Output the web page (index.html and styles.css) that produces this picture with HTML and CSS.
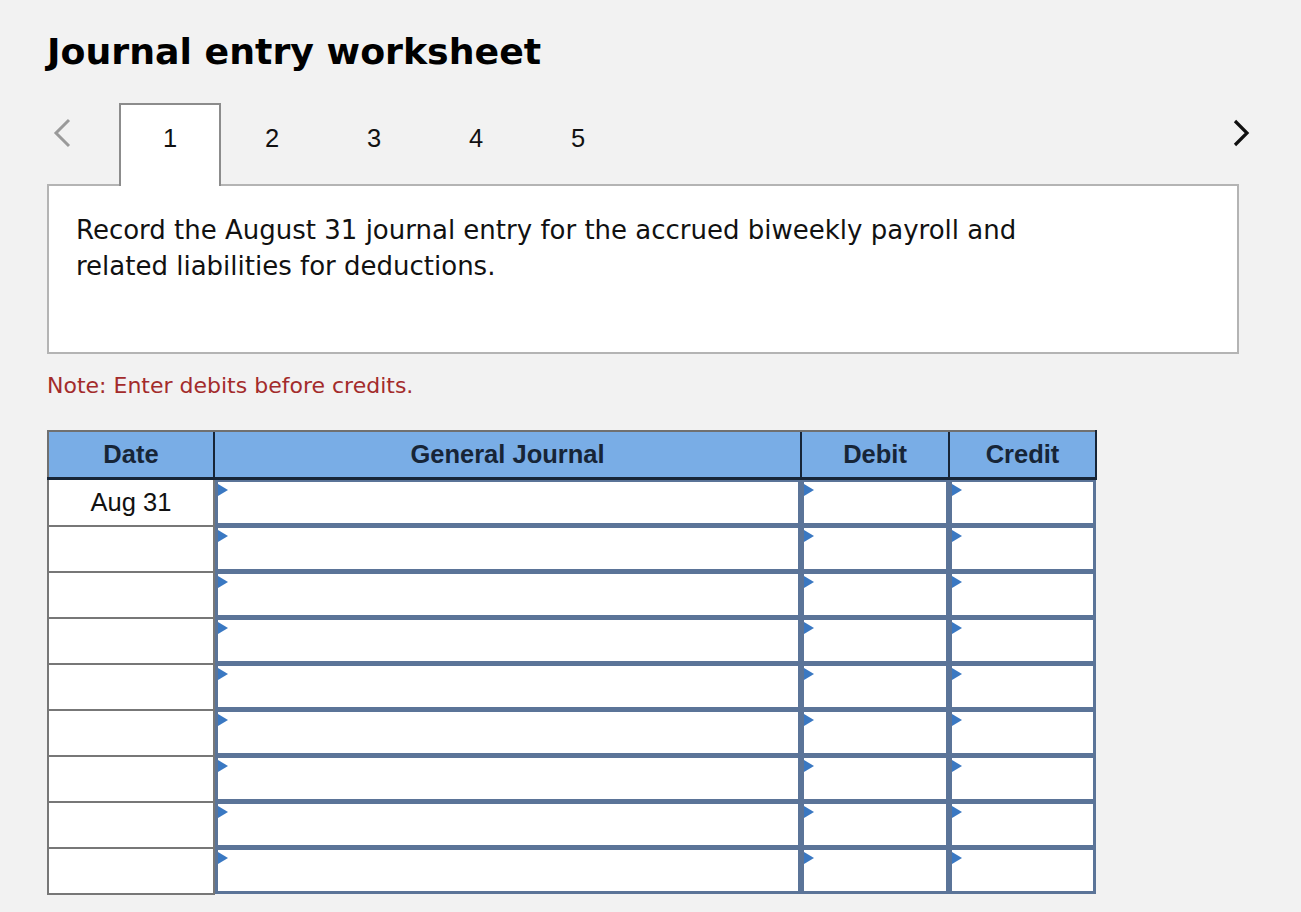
FILE: index.html
```html
<!DOCTYPE html>
<html>
<head>
<meta charset="utf-8">
<link rel="stylesheet" href="styles.css">
</head>
<body>
<div class="page">
  <h1 class="title">Journal entry worksheet</h1>
  <div class="tabbar">
    <span class="chev chev-left"><svg width="22" height="30" viewBox="0 0 22 30"><path d="M18 2 L5 15 L18 28" fill="none" stroke="#9a9a9a" stroke-width="3"/></svg></span>
    <div class="tabs">
      <div class="tab active">1</div>
      <div class="tab">2</div>
      <div class="tab">3</div>
      <div class="tab">4</div>
      <div class="tab">5</div>
    </div>
    <span class="chev chev-right"><svg width="22" height="30" viewBox="0 0 22 30"><path d="M4 3 L16 15 L4 27" fill="none" stroke="#111" stroke-width="3.2"/></svg></span>
  </div>
  <div class="panel">
    <p>Record the August 31 journal entry for the accrued biweekly payroll and<br>related liabilities for deductions.</p>
  </div>
  <p class="note">Note: Enter debits before credits.</p>
  <table class="journal">
    <thead>
      <tr>
        <th class="c-date">Date</th>
        <th class="c-gj">General Journal</th>
        <th class="c-amt">Debit</th>
        <th class="c-amt last">Credit</th>
      </tr>
    </thead>
    <tbody id="rows"></tbody>
  </table>
</div>
<script>
  var rows = document.getElementById('rows');
  for (var i = 0; i < 9; i++) {
    var tr = document.createElement('tr');
    tr.innerHTML = '<td class="d">' + (i === 0 ? 'Aug 31' : '') + '</td>' +
      '<td class="in"><div class="box"><span class="tri"></span></div></td>' +
      '<td class="in"><div class="box"><span class="tri"></span></div></td>' +
      '<td class="in"><div class="box"><span class="tri"></span></div></td>';
    rows.appendChild(tr);
  }
</script>
</body>
</html>
```
FILE: styles.css
```css
html, body {
  margin: 0;
  padding: 0;
  background: #f2f2f2;
}
.page {
  padding: 32px 0 0 47px;
  width: 1192px;
}
.title {
  margin: 0;
  font-family: "DejaVu Sans", Verdana, sans-serif;
  font-weight: bold;
  font-size: 36.3px;
  line-height: 40px;
  color: #000;
}
.tabbar {
  margin-top: 31px;
  display: flex;
  align-items: flex-start;
  height: 81px;
}
.chev {
  display: flex;
  align-items: center;
  height: 60px;
}
.chev-left {
  width: 72px;
  padding-left: 4px;
  box-sizing: border-box;
}
.chev-right {
  margin-left: auto;
  margin-right: -14px;
}
.tabs {
  display: flex;
}
.tab {
  width: 102px;
  height: 81px;
  box-sizing: border-box;
  text-align: center;
  padding-top: 21px;
  font-family: "Liberation Sans", Arial, sans-serif;
  font-size: 25.5px;
  color: #111;
}
.tab.active {
  background: #fff;
  border: 2px solid #8c8c8c;
  border-bottom: none;
  padding-top: 19px;
  position: relative;
  z-index: 1;
  height: 83px;
}
.panel {
  background: #fff;
  border: 2px solid #b4b4b4;
  height: 170px;
  box-sizing: border-box;
  padding: 26px 27px 0;
}
.panel p {
  margin: 0;
  font-family: "DejaVu Sans", Verdana, sans-serif;
  font-size: 26px;
  line-height: 36px;
  color: #111;
}
.note {
  margin: 17px 0 0;
  font-family: "DejaVu Sans", Verdana, sans-serif;
  font-size: 22px;
  line-height: 30px;
  color: #a32b2b;
}
.journal {
  margin-top: 29px;
  border-collapse: collapse;
  font-family: "Liberation Sans", Arial, sans-serif;
  table-layout: fixed;
}
.journal th {
  background: #79ade6;
  height: 45px;
  padding: 0;
  font-size: 25.5px;
  font-weight: bold;
  color: #172537;
  border-left: 2px solid #172537;
  border-top: 2px solid #707070;
  border-bottom: 3px solid #172537;
}
.journal th.c-date {
  width: 164px;
  border-left: 2px solid #707070;
}
.journal th.c-gj { width: 585px; }
.journal th.c-amt { width: 146px; }
.journal th.last {
  width: 145px;
  border-right: 2px solid #172537;
}
.journal td {
  height: 46px;
  padding: 0;
  box-sizing: border-box;
}
.journal td.d {
  border: 2px solid #777;
  background: #fff;
  text-align: center;
  vertical-align: top;
  padding-top: 8px;
  font-size: 25.5px;
  color: #111;
}
.journal td.in {
  vertical-align: top;
}
.box {
  position: relative;
  height: 46px;
  box-sizing: border-box;
  background: #fff;
  border: 3px solid #5b7498;
  border-top-width: 2px;
}
.tri {
  position: absolute;
  left: 0;
  top: 2px;
  width: 0;
  height: 0;
  border-top: 6px solid transparent;
  border-bottom: 6px solid transparent;
  border-left: 10px solid #3a78c2;
}
```
